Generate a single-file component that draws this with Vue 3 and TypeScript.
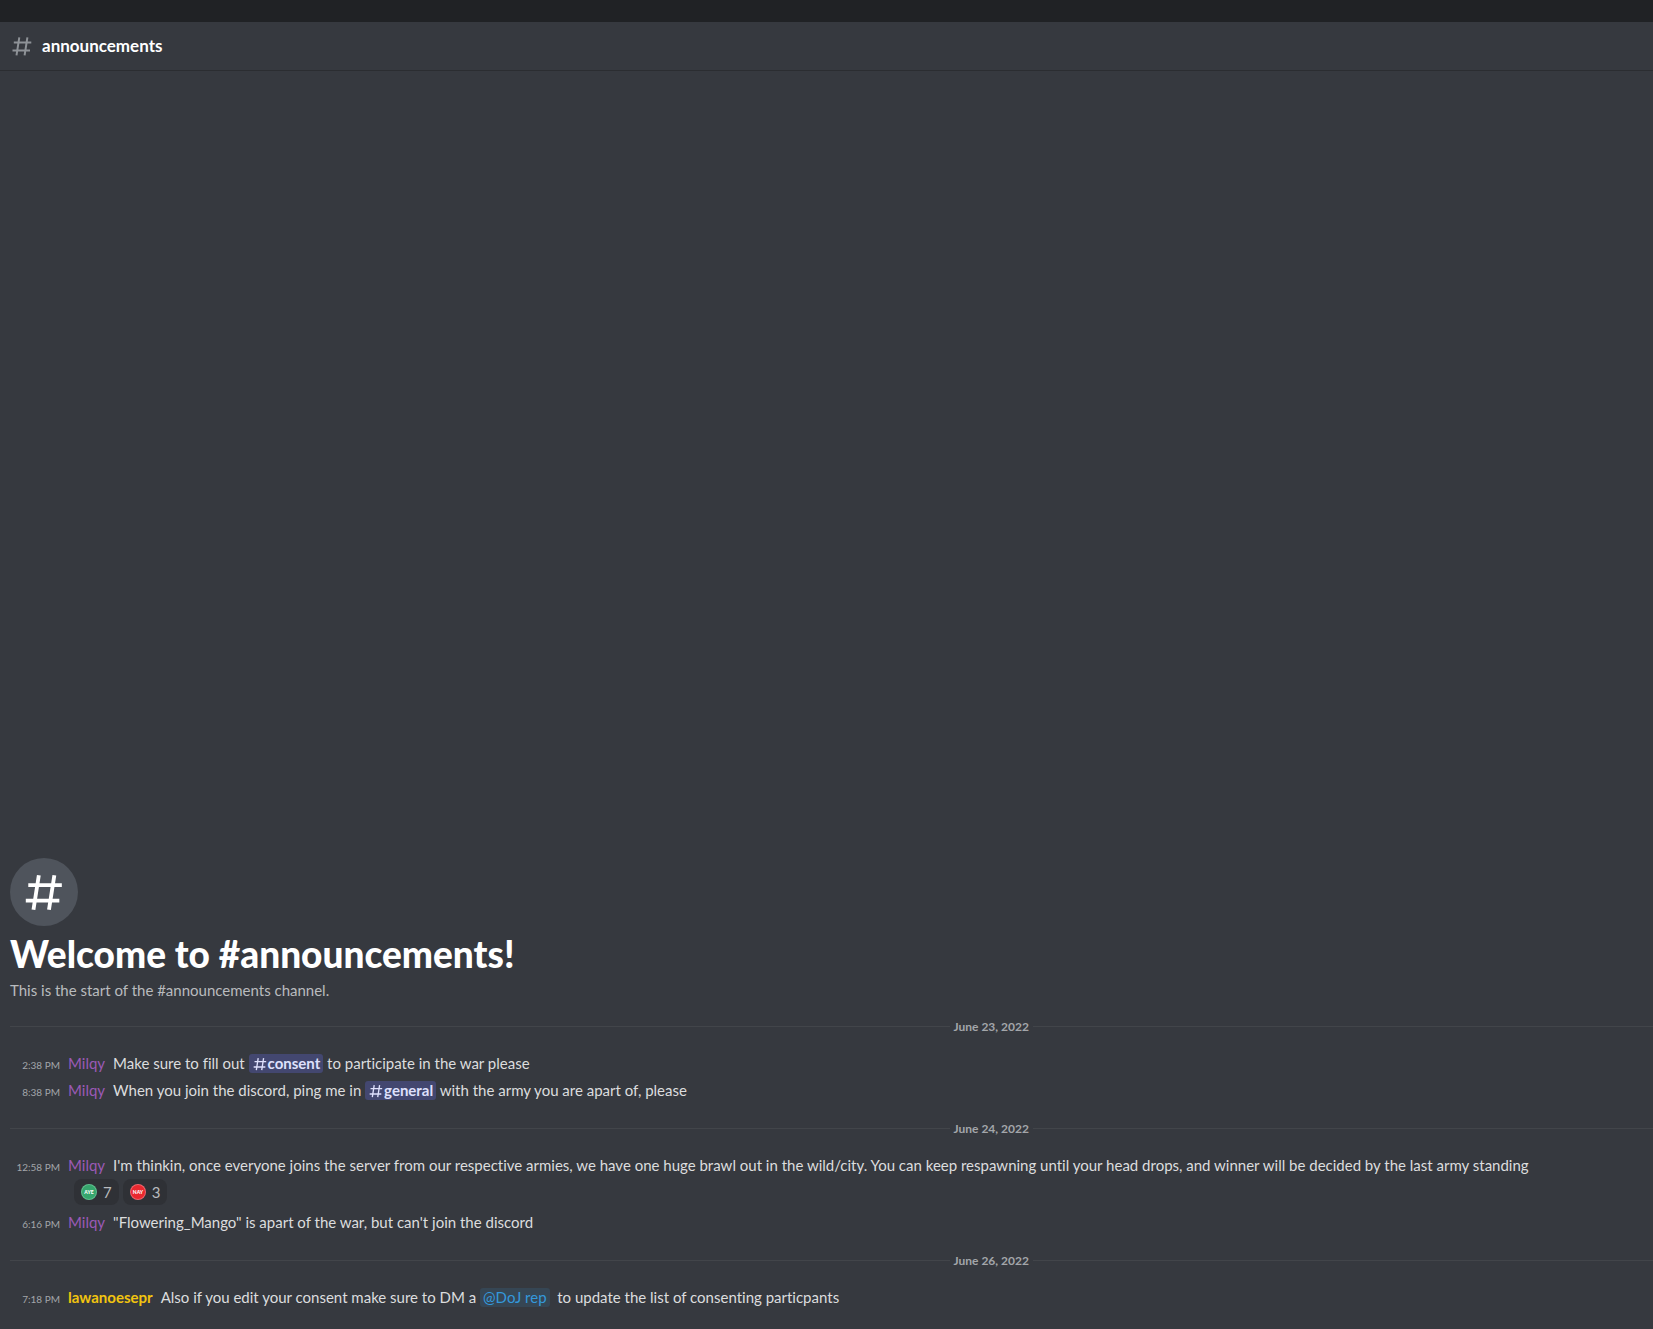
<script setup lang="ts">
interface Part {
  kind: 'text' | 'channel' | 'role'
  value: string
}

interface Reaction {
  label: string
  tone: 'aye' | 'nay'
  count: number
}

interface Message {
  time: string
  author: string
  tone: 'purple' | 'gold'
  parts: Part[]
  reactions?: Reaction[]
}

interface Day {
  date: string
  messages: Message[]
}

const channel = 'announcements'
const hashPath = 'M9.3 3.3 6.5 21.3M17.4 3.3l-2.8 18M3.8 8.4h17.5M2.5 16.5H20'

const days: Day[] = [
  {
    date: 'June 23, 2022',
    messages: [
      {
        time: '2:38 PM',
        author: 'Milqy',
        tone: 'purple',
        parts: [
          { kind: 'text', value: 'Make sure to fill out ' },
          { kind: 'channel', value: 'consent' },
          { kind: 'text', value: ' to participate in the war please' },
        ],
      },
      {
        time: '8:38 PM',
        author: 'Milqy',
        tone: 'purple',
        parts: [
          { kind: 'text', value: 'When you join the discord, ping me in ' },
          { kind: 'channel', value: 'general' },
          { kind: 'text', value: ' with the army you are apart of, please' },
        ],
      },
    ],
  },
  {
    date: 'June 24, 2022',
    messages: [
      {
        time: '12:58 PM',
        author: 'Milqy',
        tone: 'purple',
        parts: [
          {
            kind: 'text',
            value:
              "I'm thinkin, once everyone joins the server from our respective armies, we have one huge brawl out in the wild/city. You can keep respawning until your head drops, and winner will be decided by the last army standing",
          },
        ],
        reactions: [
          { label: 'AYE', tone: 'aye', count: 7 },
          { label: 'NAY', tone: 'nay', count: 3 },
        ],
      },
      {
        time: '6:16 PM',
        author: 'Milqy',
        tone: 'purple',
        parts: [{ kind: 'text', value: '"Flowering_Mango" is apart of the war, but can\'t join the discord' }],
      },
    ],
  },
  {
    date: 'June 26, 2022',
    messages: [
      {
        time: '7:18 PM',
        author: 'lawanoesepr',
        tone: 'gold',
        parts: [
          { kind: 'text', value: 'Also if you edit your consent make sure to DM a ' },
          { kind: 'role', value: '@DoJ rep' },
          { kind: 'text', value: '\u00a0 to update the list of consenting particpants' },
        ],
      },
    ],
  },
]
</script>

<template>
  <div class="app">
    <div class="titlebar"></div>
    <header class="topbar">
      <svg class="topbar-hash" viewBox="0 0 24 24" aria-hidden="true">
        <path :d="hashPath" />
      </svg>
      <h1 class="topbar-name">{{ channel }}</h1>
    </header>

    <main class="chat">
      <section class="welcome">
        <div class="badge">
          <svg viewBox="0 0 24 24" aria-hidden="true">
            <path :d="hashPath" />
          </svg>
        </div>
        <h2 class="welcome-title">Welcome to #{{ channel }}!</h2>
        <p class="welcome-text">This is the start of the #{{ channel }} channel.</p>
      </section>

      <section v-for="day in days" :key="day.date" class="day">
        <div class="divider"><span>{{ day.date }}</span></div>
        <article v-for="message in day.messages" :key="message.time" class="message">
          <div class="line">
            <time class="time">{{ message.time }}</time>
            <button type="button" class="author" :class="message.tone">{{ message.author }}</button>
            <p class="body"><template v-for="(part, i) in message.parts" :key="i"><a v-if="part.kind === 'channel'" class="mention" href="#"><svg viewBox="0 0 24 24" aria-hidden="true"><path :d="hashPath" /></svg>{{ part.value }}</a><span v-else-if="part.kind === 'role'" class="role">{{ part.value }}</span><template v-else>{{ part.value }}</template></template></p>
          </div>
          <div v-if="message.reactions" class="reactions">
            <button v-for="r in message.reactions" :key="r.label" type="button" class="reaction">
              <svg class="emoji" :class="r.tone" viewBox="0 0 16 16">
                <circle class="rim" cx="8" cy="8" r="8" />
                <circle class="disc" cx="8" cy="8" r="7" />
                <text x="8" y="10" text-anchor="middle">{{ r.label }}</text>
              </svg>
              <span>{{ r.count }}</span>
            </button>
          </div>
        </article>
      </section>
    </main>
  </div>
</template>

<style>
body {
  background: #36393f;
}
</style>

<style scoped>
.app {
  display: flex;
  flex-direction: column;
  min-height: 100vh;
  background: #36393f;
  color: #dcddde;
  font-family: Lato, 'Noto Sans', sans-serif;
  font-size: 15px;
  font-variant-ligatures: none;
}
h1,
h2,
p {
  margin: 0;
}
button {
  padding: 0;
  border: 0;
  background: none;
  color: inherit;
  font: inherit;
  cursor: pointer;
}
path {
  fill: none;
  stroke: currentColor;
  stroke-width: 2;
}
.titlebar {
  height: 22px;
  background: #202225;
}
.topbar {
  display: flex;
  align-items: center;
  gap: 8px;
  height: 48px;
  padding-left: 10px;
  border-bottom: 1px solid #2b2d31;
}
.topbar-hash {
  width: 24px;
  height: 24px;
  color: #8e9297;
}
.topbar-name {
  color: #fff;
  font-size: 17px;
  font-weight: 700;
  line-height: 20px;
}
.chat {
  flex: 1;
  display: flex;
  flex-direction: column;
  justify-content: flex-end;
  padding: 0 0 18px 10px;
}
.badge {
  display: flex;
  align-items: center;
  justify-content: center;
  width: 68px;
  height: 68px;
  border-radius: 50%;
  background: #4f545c;
  color: #fff;
}
.badge svg {
  width: 46px;
  height: 46px;
}
.welcome-title {
  margin-top: 8px;
  color: #fff;
  font-size: 37px;
  font-weight: 900;
  line-height: 40px;
}
.welcome-text {
  margin-top: 5px;
  color: #b9bbbe;
  line-height: 23px;
}
.divider {
  display: flex;
  align-items: center;
  height: 48px;
  gap: 4px;
  color: #a3a6aa;
  font-size: 12px;
  font-weight: 700;
}
.divider::before,
.divider::after {
  content: '';
  height: 1px;
  background: #42454a;
}
.divider::before {
  flex: 50 1 0;
}
.divider::after {
  flex: 33 1 0;
}
.line {
  display: flex;
  align-items: baseline;
  gap: 8px;
  line-height: 27px;
}
.time {
  width: 50px;
  color: #a3a6aa;
  font-size: 10px;
  line-height: 16px;
  text-align: right;
  white-space: nowrap;
}
.purple {
  color: #9b59b6;
}
.gold {
  color: #f1c40f;
  font-weight: 700;
}
.author {
  line-height: 20px;
}
.body {
  flex: 1;
}
.mention,
.role {
  padding: 0 3px 1px;
  border-radius: 3px;
}
.mention {
  background: #434770;
  color: #dee0fc;
  font-weight: 700;
  text-decoration: none;
}
.mention svg {
  width: 16px;
  height: 16px;
  vertical-align: -3px;
}
.role {
  background: #364654;
  color: #3498db;
}
.reactions {
  display: flex;
  gap: 4px;
  padding: 0 0 4px 64px;
}
.reaction {
  display: flex;
  align-items: center;
  gap: 6px;
  height: 26px;
  padding: 0 7px;
  border-radius: 8px;
  background: #2f3136;
  color: #b9bbbe;
}
.emoji {
  width: 16px;
  height: 16px;
}
.emoji text {
  fill: #fff;
  font-size: 5px;
  font-weight: 900;
}
.aye .rim {
  fill: #5fc08e;
}
.aye .disc {
  fill: #36a56d;
}
.nay .rim {
  fill: #f0666d;
}
.nay .disc {
  fill: #e9282f;
}
</style>
